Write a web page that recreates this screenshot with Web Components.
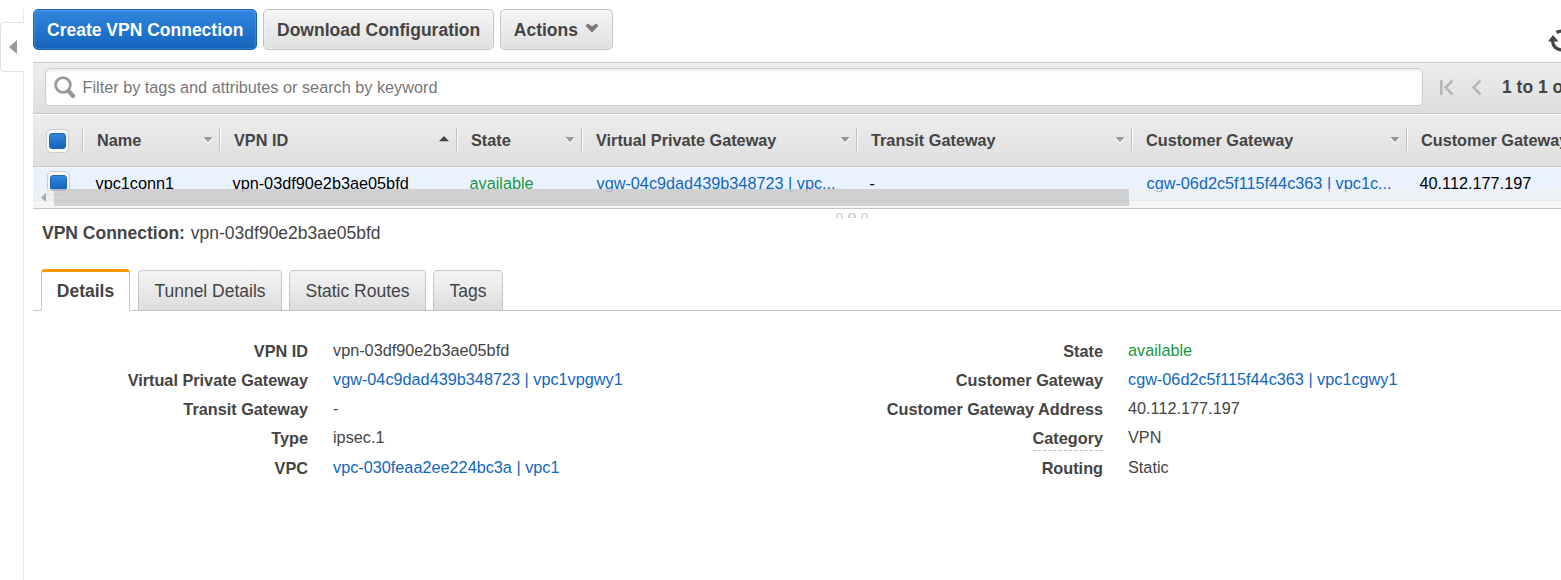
<!DOCTYPE html>
<html lang="en">
<head>
<meta charset="utf-8">
<title>VPN Connections</title>
<style>
    html, body {
        margin: 0;
        height: 100%;
        overflow: hidden;
        background: #fff;
        color: #444;
        font: 16.25px/20px "Liberation Sans", Arial, sans-serif;
    }
</style>
</head>
<body>
<vpn-console></vpn-console>

<script>
const define = (name, html, setup) => {
    const template = document.createElement("template");
    template.innerHTML = html;
    customElements.define(name, class extends HTMLElement {
        constructor() {
            super();
            this.attachShadow({ mode: "open" });
            this.shadowRoot.appendChild(template.content.cloneNode(true));
        }
        connectedCallback() {
            if (setup) setup(this, this.shadowRoot);
        }
    });
};

define("side-handle", `
    <style>
        :host { display: block; width: 24px; flex: none; box-sizing: border-box; padding-top: 9px; }
        .rail { height: 571px; border-right: 1px solid #e9e9e9; width: 23px; }
        .space { height: 13px; }
        .handle {
            box-sizing: border-box;
            width: 24px;
            height: 50px;
            display: flex;
            align-items: center;
            padding-left: 8px;
            background: #fff;
            border: 1px solid #e0e0e0;
            border-right: 0;
            border-radius: 4px 0 0 4px;
        }
        svg { display: block; }
    </style>
    <div class="rail">
        <div class="space"></div>
        <div class="handle"><svg width="8" height="14"><path d="M8 0v14L0 7z" fill="#999"/></svg></div>
    </div>
`);

define("console-button", `
    <style>
        :host {
            display: flex;
            align-items: center;
            box-sizing: border-box;
            height: 41px;
            padding: 0 12.6px 0 13px;
            gap: 7px;
            border: 1px solid #c3c3c3;
            border-radius: 5px;
            background: linear-gradient(#f5f5f5, #dfdfdf);
            box-shadow: inset 0 0 2px #fff;
            color: #444;
            font-size: 17.5px;
            font-weight: bold;
            white-space: nowrap;
        }
        :host([primary]) {
            border-color: #1a5fb2;
            background: linear-gradient(#3186e0, #1465ba);
            box-shadow: inset 0 0 2px rgba(255, 255, 255, 0.5);
            color: #fff;
        }
    </style>
    <slot></slot>
`);

define("filter-box", `
    <style>
        :host {
            display: flex;
            flex: none;
            align-items: center;
            box-sizing: border-box;
            width: 1378px;
            height: 38px;
            padding-left: 7.5px;
            gap: 7px;
            border: 1px solid #ccc;
            border-radius: 5px;
            background: #fff;
            box-shadow: inset 0 2px 3px rgba(0, 0, 0, 0.08);
            color: #777;
        }
        svg { flex: none; }
    </style>
    <svg width="22" height="23" viewBox="0 0 22 23" fill="none" stroke="#999">
        <circle cx="9" cy="9" r="7.4" stroke-width="2.7"/>
        <path d="M14.5 15l4.500 5" stroke-width="4.3" stroke-linecap="round"/>
    </svg>
    <slot></slot>
`);

define("check-box", `
    <style>
        :host {
            display: block;
            box-sizing: border-box;
            width: 23px;
            height: 24px;
            padding: 3px 2px 3px 2px;
            border: 1px solid #ccc;
            border-radius: 5px;
            background: #f7f7f7;
        }
        div {
            box-sizing: border-box;
            width: 17px;
            height: 16px;
            border: 1px solid #1e66b5;
            border-radius: 3px;
            background: linear-gradient(#3085de, #1465ba);
        }
    </style>
    <div></div>
`);

define("head-cell", `
    <style>
        :host {
            display: flex;
            align-items: center;
            box-sizing: border-box;
            flex: none;
            height: 52px;
            padding: 0 6px 0 0;
            color: #444;
            font-weight: bold;
            white-space: nowrap;
        }
        .line {
            width: 1px;
            height: 23px;
            margin: -3px 14px 0 0;
            background: #bdbdbd;
            box-shadow: 1px 0 #fff;
        }
        .label { flex: 1; margin-top: -2px; }
        svg { display: none; flex: none; margin-top: -1px; }
        :host([sort="none"]) .down, :host([sort="asc"]) .up { display: block; }
        .up { margin: -4px 1px 0 0; }
    </style>
    <div class="line"></div>
    <div class="label"><slot></slot></div>
    <svg class="down" width="10" height="7"><path d="M0 1h10L5 7z" fill="#fff" opacity=".7"/><path d="M.5 0h9L5 5.2z" fill="#999"/></svg>
    <svg class="up" width="10" height="6"><path d="M0 5.3h10L5 0z" fill="#444"/></svg>
`, (el) => { el.style.width = el.getAttribute("width") + "px"; });

define("body-cell", `
    <style>
        :host {
            display: block;
            box-sizing: border-box;
            flex: none;
            padding-left: 13.5px;
            color: #000;
            white-space: nowrap;
        }
        :host([kind="link"]) { color: #1166bb; padding-left: 15.5px; }
        :host([kind="ok"]) { color: #1a9641; }
    </style>
    <slot></slot>
`, (el) => { el.style.width = el.getAttribute("width") + "px"; });

define("connection-table", `
    <style>
        :host { display: block; position: relative; height: 94px; overflow: hidden; border-bottom: 1px solid #c5c5c5; }
        .head {
            display: flex;
            align-items: center;
            box-sizing: border-box;
            height: 53px;
            border-top: 1px solid #fff;
            border-bottom: 1px solid #c8c8c8;
            background: linear-gradient(#ededed, #dedede);
        }
        .check { width: 49px; flex: none; padding-left: 13px; box-sizing: border-box; }
        .row {
            display: flex;
            box-sizing: border-box;
            height: 34px;
            padding-top: 6px;
            background: #eaf2fe;
            border-bottom: 1px solid #ddd;
        }
        .row .check { margin-top: -2px; padding-left: 13.5px; }
        /* translucent horizontal scrollbar laid over the last row */
        .scroll {
            position: absolute;
            left: 0;
            right: 0;
            bottom: 0;
            height: 19px;
            display: flex;
            background: rgba(240, 240, 236, 0.65);
        }
        .scroll svg { flex: none; margin: 3px 8px 0 8px; }
        .thumb { width: 1075px; height: 17px; background: rgba(178, 178, 178, 0.52); }
    </style>
    <div class="head">
        <div class="check"><check-box></check-box></div>
        <head-cell width="137" sort="none">Name</head-cell>
        <head-cell width="237" sort="asc">VPN ID</head-cell>
        <head-cell width="125" sort="none">State</head-cell>
        <head-cell width="275" sort="none">Virtual Private Gateway</head-cell>
        <head-cell width="275" sort="none">Transit Gateway</head-cell>
        <head-cell width="275" sort="none">Customer Gateway</head-cell>
        <head-cell width="275">Customer Gateway</head-cell>
    </div>
    <div class="row">
        <div class="check"><check-box></check-box></div>
        <body-cell width="137">vpc1conn1</body-cell>
        <body-cell width="237">vpn-03df90e2b3ae05bfd</body-cell>
        <body-cell width="125" kind="ok">available</body-cell>
        <body-cell width="275" kind="link">vgw-04c9dad439b348723 | vpc...</body-cell>
        <body-cell width="275">-</body-cell>
        <body-cell width="275" kind="link">cgw-06d2c5f115f44c363 | vpc1c...</body-cell>
        <body-cell width="275">40.112.177.197</body-cell>
    </div>
    <div class="scroll">
        <svg width="5" height="11"><path d="M5 1v9L0 5.5z" fill="#aaa"/></svg>
        <div class="thumb"></div>
    </div>
`);

define("tab-item", `
    <style>
        :host {
            display: flex;
            align-items: center;
            justify-content: center;
            box-sizing: border-box;
            height: 41px;
            border: 1px solid #c5c5c5;
            border-radius: 4px 4px 0 0;
            background: linear-gradient(#f5f5f5, #dcdcdc);
            font-size: 17.5px;
            white-space: nowrap;
        }
        :host([active]) {
            height: 42px;
            border-top: 3px solid #f90;
            border-bottom-color: #fff;
            background: #fff;
            font-weight: bold;
        }
    </style>
    <slot></slot>
`, (el) => { el.style.width = el.getAttribute("width") + "px"; });

define("detail-row", `
    <style>
        :host { display: flex; height: 29.25px; }
        .label {
            width: var(--label-width);
            margin: 1px 25px 0 0;
            text-align: right;
            font-weight: bold;
        }
        .label span { display: inline-block; }
        :host([hint]) .label span { height: 22px; border-bottom: 1px dashed #bbb; }
        :host([kind="link"]) .value { color: #1166bb; }
        :host([kind="ok"]) .value { color: #1a9641; }
    </style>
    <div class="label"><span></span></div>
    <div class="value"><slot></slot></div>
`, (el, root) => { root.querySelector("span").textContent = el.getAttribute("label"); });

define("vpn-console", `
    <style>
        :host { display: flex; width: 1561px; height: 580px; overflow: hidden; }
        main { width: 1528px; margin-left: 9px; overflow: hidden; }
        .toolbar { display: flex; height: 53px; padding-top: 9px; gap: 6px; }
        .refresh { margin: 20px -13px 0 auto; }
        .search {
            display: flex;
            align-items: center;
            box-sizing: border-box;
            height: 52px;
            padding: 0 0 2px 12px;
            border-top: 1px solid #c5c5c5;
            border-bottom: 1px solid #c5c5c5;
            background: linear-gradient(#ededed, #dedede);
            white-space: nowrap;
        }
        .search svg { flex: none; margin-left: 17px; }
        .search .count { margin-left: 20px; font-size: 17.5px; font-weight: bold; }
        .splitter { display: flex; gap: 5px; height: 14px; padding: 4px 0 0 803px; box-sizing: border-box; }
        .splitter i { width: 7.3px; height: 5px; border-radius: 3px 3px 0 0; background: radial-gradient(circle at 50% 60%, #fff 1px, #d4d4d4 2.5px); }
        .title { padding-left: 9px; font-size: 17.5px; white-space: nowrap; }
        .title span { margin-left: 1px; }
        .tabs {
            display: flex;
            align-items: flex-end;
            gap: 7px;
            height: 42px;
            margin-top: 26px;
            padding-left: 8px;
            background: linear-gradient(#c5c5c5, #c5c5c5) 0 100% / 100% 1px no-repeat;
        }
        .tabs tab-item:first-child { margin-right: 1px; }
        .details { display: flex; padding-top: 28.6px; }
        .left { width: 795px; --label-width: 275px; }
        .right { --label-width: 275px; }
    </style>
    <side-handle></side-handle>
    <main>
        <div class="toolbar">
            <console-button primary>Create VPN Connection</console-button>
            <console-button>Download Configuration</console-button>
            <console-button>Actions
                <svg width="14" height="10" viewBox="0 0 14 10" style="margin-top:-3px"><path d="M1 2.5L3 1l4 3 4-3 2 1.500L7 9z" fill="#777" stroke="#777" stroke-linejoin="round"/></svg>
            </console-button>
            <svg class="refresh" width="26" height="24" viewBox="0 0 26 24">
                <path d="M8.500 3.500A9 9 0 0 1 22 11M4.800 11A8.700 8.700 0 0 0 18 19.500" fill="none" stroke="#444" stroke-width="3.200"/>
                <path d="M0 12.500L5 6l5.500 6.500zM16 11h10l-5 6z" fill="#444"/>
            </svg>
        </div>
        <div class="search">
            <filter-box>Filter by tags and attributes or search by keyword</filter-box>
            <svg width="14" height="17" fill="none" stroke="#b5b5b5" stroke-width="2.500"><path d="M1.300 1v15M12.500 1.500l-7 7 7 7"/></svg>
            <svg width="11" height="17" fill="none" stroke="#b5b5b5" stroke-width="2.500"><path d="M9.500 1.500l-7 7 7 7"/></svg>
            <div class="count">1 to 1 of 1</div>
        </div>
        <connection-table></connection-table>
        <div class="splitter"><i></i><i></i><i></i></div>
        <div class="title"><b>VPN Connection:</b> <span>vpn-03df90e2b3ae05bfd</span></div>
        <div class="tabs">
            <tab-item active width="89">Details</tab-item>
            <tab-item width="144">Tunnel Details</tab-item>
            <tab-item width="137">Static Routes</tab-item>
            <tab-item width="70">Tags</tab-item>
        </div>
        <div class="details">
            <div class="left">
                <detail-row label="VPN ID">vpn-03df90e2b3ae05bfd</detail-row>
                <detail-row label="Virtual Private Gateway" kind="link">vgw-04c9dad439b348723 | vpc1vpgwy1</detail-row>
                <detail-row label="Transit Gateway">-</detail-row>
                <detail-row label="Type">ipsec.1</detail-row>
                <detail-row label="VPC" kind="link">vpc-030feaa2ee224bc3a | vpc1</detail-row>
            </div>
            <div class="right">
                <detail-row label="State" kind="ok">available</detail-row>
                <detail-row label="Customer Gateway" kind="link">cgw-06d2c5f115f44c363 | vpc1cgwy1</detail-row>
                <detail-row label="Customer Gateway Address">40.112.177.197</detail-row>
                <detail-row label="Category" hint>VPN</detail-row>
                <detail-row label="Routing">Static</detail-row>
            </div>
        </div>
    </main>
</vpn-console>
`);
</script>
</body>
</html>
